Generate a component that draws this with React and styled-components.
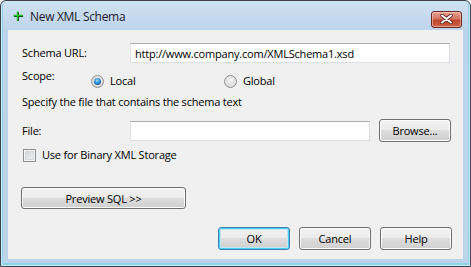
import React from 'react';
import styled, { createGlobalStyle, css } from 'styled-components';

const GlobalStyle = createGlobalStyle`
  html, body {
    margin: 0;
    padding: 0;
    background: #ffffff;
  }
  body {
    font-family: 'Open Sans', 'Noto Sans', sans-serif;
    font-size: 11px;
    letter-spacing: -0.2px;
    color: #000;
  }
`;

export default function App() {
  return (
    <>
      <GlobalStyle />
      <Window>
        <TitleBar>
          <TitleIcon viewBox="0 0 10 10">
            <path d="M4.5 0.5v9M0.5 4.5h9" stroke="#0b2a0b" strokeWidth="1.6" transform="translate(0.6 0.6)" />
            <path d="M4.5 0.5v9M0.5 4.5h9" stroke="#22c322" strokeWidth="1.4" />
          </TitleIcon>
          <TitleText>New XML Schema</TitleText>
          <CloseButton>
            <svg width="15" height="10" viewBox="0 0 15 10">
              <path d="M3 1.5l9 7M12 1.5l-9 7" stroke="#5a2a22" strokeWidth="3.6" strokeLinecap="round" />
              <path d="M3 1.5l9 7M12 1.5l-9 7" stroke="#ffffff" strokeWidth="2" strokeLinecap="round" />
            </svg>
          </CloseButton>
        </TitleBar>

        <Client>
          <FieldRow>
            <Label>Schema URL:</Label>
            <TextBox value="http://www.company.com/XMLSchema1.xsd" readOnly />
          </FieldRow>

          <ScopeRow>
            <Label>Scope:</Label>
            <RadioGroup>
              <RadioOption $width={133}>
                <Radio $checked />
                Local
              </RadioOption>
              <RadioOption>
                <Radio />
                Global
              </RadioOption>
            </RadioGroup>
          </ScopeRow>

          <Hint>Specify the file that contains the schema text</Hint>

          <FileRow>
            <Label>File:</Label>
            <TextBox value="" readOnly />
            <Button>Browse...</Button>
          </FileRow>

          <CheckRow>
            <CheckBox />
            Use for Binary XML Storage
          </CheckRow>

          <PreviewButton>Preview SQL &gt;&gt;</PreviewButton>

          <Footer>
            <Button $default>OK</Button>
            <Button>Cancel</Button>
            <Button>Help</Button>
          </Footer>
        </Client>
      </Window>
    </>
  );
}

const Window = styled.div`
  width: 471px;
  height: 267px;
  box-sizing: border-box;
  display: flex;
  flex-direction: column;
  border: 1px solid #404246;
  border-radius: 6px 6px 0 0;
  background: linear-gradient(to bottom, #d0e1f3 0px, #bdd4ec 30px, #bcd3ea 100%);
  box-shadow: inset 0 0 0 1px rgba(255, 255, 255, 0.55), inset 0 -1px 0 2px #8fd2ec;
  padding: 0 7px 7px 7px;
  overflow: hidden;
`;

const TitleBar = styled.div`
  height: 29px;
  display: flex;
  align-items: center;
  padding: 0 1px 0 5px;
`;

const TitleIcon = styled.svg`
  width: 10px;
  height: 10px;
  margin-top: 1px;
`;

const TitleText = styled.div`
  margin-left: 7px;
  font-size: 12px;
  letter-spacing: -0.3px;
  color: #1a1a2a;
  flex: 1;
  margin-top: 1px;
`;

const CloseButton = styled.div`
  width: 31px;
  height: 17px;
  box-sizing: border-box;
  margin-top: 7px;
  display: flex;
  align-items: center;
  justify-content: center;
  border: 1px solid #6b2a22;
  border-radius: 3px;
  background: linear-gradient(to bottom, #e8a293 0%, #d47563 45%, #c2462f 55%, #d0634a 100%);
  box-shadow: inset 0 0 0 1px rgba(255, 220, 210, 0.5);
`;

const Client = styled.div`
  flex: 1;
  display: flex;
  flex-direction: column;
  background: #f0f0f0;
  padding: 13px 11px 9px 14px;
`;

const Label = styled.div`
  line-height: 16px;
`;

const FieldRow = styled.div`
  display: grid;
  grid-template-columns: 108px 1fr;
  align-items: center;
  height: 20px;
  margin-right: 2px;
`;

const TextBox = styled.input`
  box-sizing: border-box;
  height: 20px;
  width: 100%;
  margin: 0;
  padding: 0 4px;
  border: 1px solid #dbdfe6;
  border-top-color: #abadb3;
  border-left-color: #e2e3ea;
  background: #fff;
  font-family: inherit;
  font-size: 11px;
  letter-spacing: inherit;
  color: #000;
  outline: none;
`;

const ScopeRow = styled.div`
  display: grid;
  grid-template-columns: 69px 1fr;
  align-items: start;
  height: 26px;
  margin-top: 5px;
`;

const RadioGroup = styled.div`
  display: flex;
  margin-top: 5px;
`;

const RadioOption = styled.div`
  display: flex;
  align-items: center;
  gap: 6px;
  line-height: 16px;
  width: ${(p) => (p.$width ? `${p.$width}px` : 'auto')};
`;

const Radio = styled.span`
  width: 13px;
  height: 13px;
  box-sizing: border-box;
  border-radius: 50%;
  border: 1px solid #8e8f8f;
  background: radial-gradient(circle at 50% 40%, #f4f4f4 0%, #dcdcdc 70%, #c9c9c9 100%);
  position: relative;
  ${(p) => p.$checked && css`
    &::after {
      content: '';
      position: absolute;
      left: 2px;
      top: 2px;
      width: 7px;
      height: 7px;
      border-radius: 50%;
      background: radial-gradient(circle at 45% 35%, #a8e0ff 0%, #2a8ad4 45%, #0a3f78 100%);
    }
  `}
`;

const Hint = styled.div`
  line-height: 16px;
`;

const FileRow = styled.div`
  display: grid;
  grid-template-columns: 108px 240px 72px;
  align-items: center;
  height: 22px;
  margin-top: 9px;

  & > button {
    margin-left: 9px;
  }
`;

const CheckRow = styled.div`
  display: flex;
  align-items: center;
  gap: 6px;
  line-height: 14px;
  margin-top: 7px;
  margin-left: 1px;
`;

const CheckBox = styled.span`
  width: 13px;
  height: 13px;
  box-sizing: border-box;
  border: 1px solid #8e8f8f;
  background: linear-gradient(135deg, #cbcfd5 0%, #f6f6f6 100%);
  box-shadow: inset 0 0 0 1px #f4f4f4, inset 0 0 0 2px #d6d9de;
`;

const Button = styled.button`
  box-sizing: border-box;
  width: 72px;
  height: 23px;
  margin: 0;
  padding: 0;
  font-family: inherit;
  font-size: 11px;
  letter-spacing: inherit;
  color: #000;
  border: 1px solid #707070;
  border-radius: 3px;
  background: linear-gradient(to bottom, #f2f2f2 0%, #ebebeb 49%, #dddddd 50%, #cfcfcf 100%);
  box-shadow: inset 0 0 0 1px #fcfcfc;
  ${(p) => p.$default && css`
    border-color: #3c7fb1;
    box-shadow: inset 0 0 0 1px #48d0f4, inset 0 0 0 2px #c4e5f6;
  `}
`;

const PreviewButton = styled(Button)`
  width: 165px;
  height: 22px;
  margin-top: 25px;
  margin-left: -1px;
`;

const Footer = styled.div`
  margin-top: auto;
  display: flex;
  justify-content: flex-end;
  gap: 9px;
`;
